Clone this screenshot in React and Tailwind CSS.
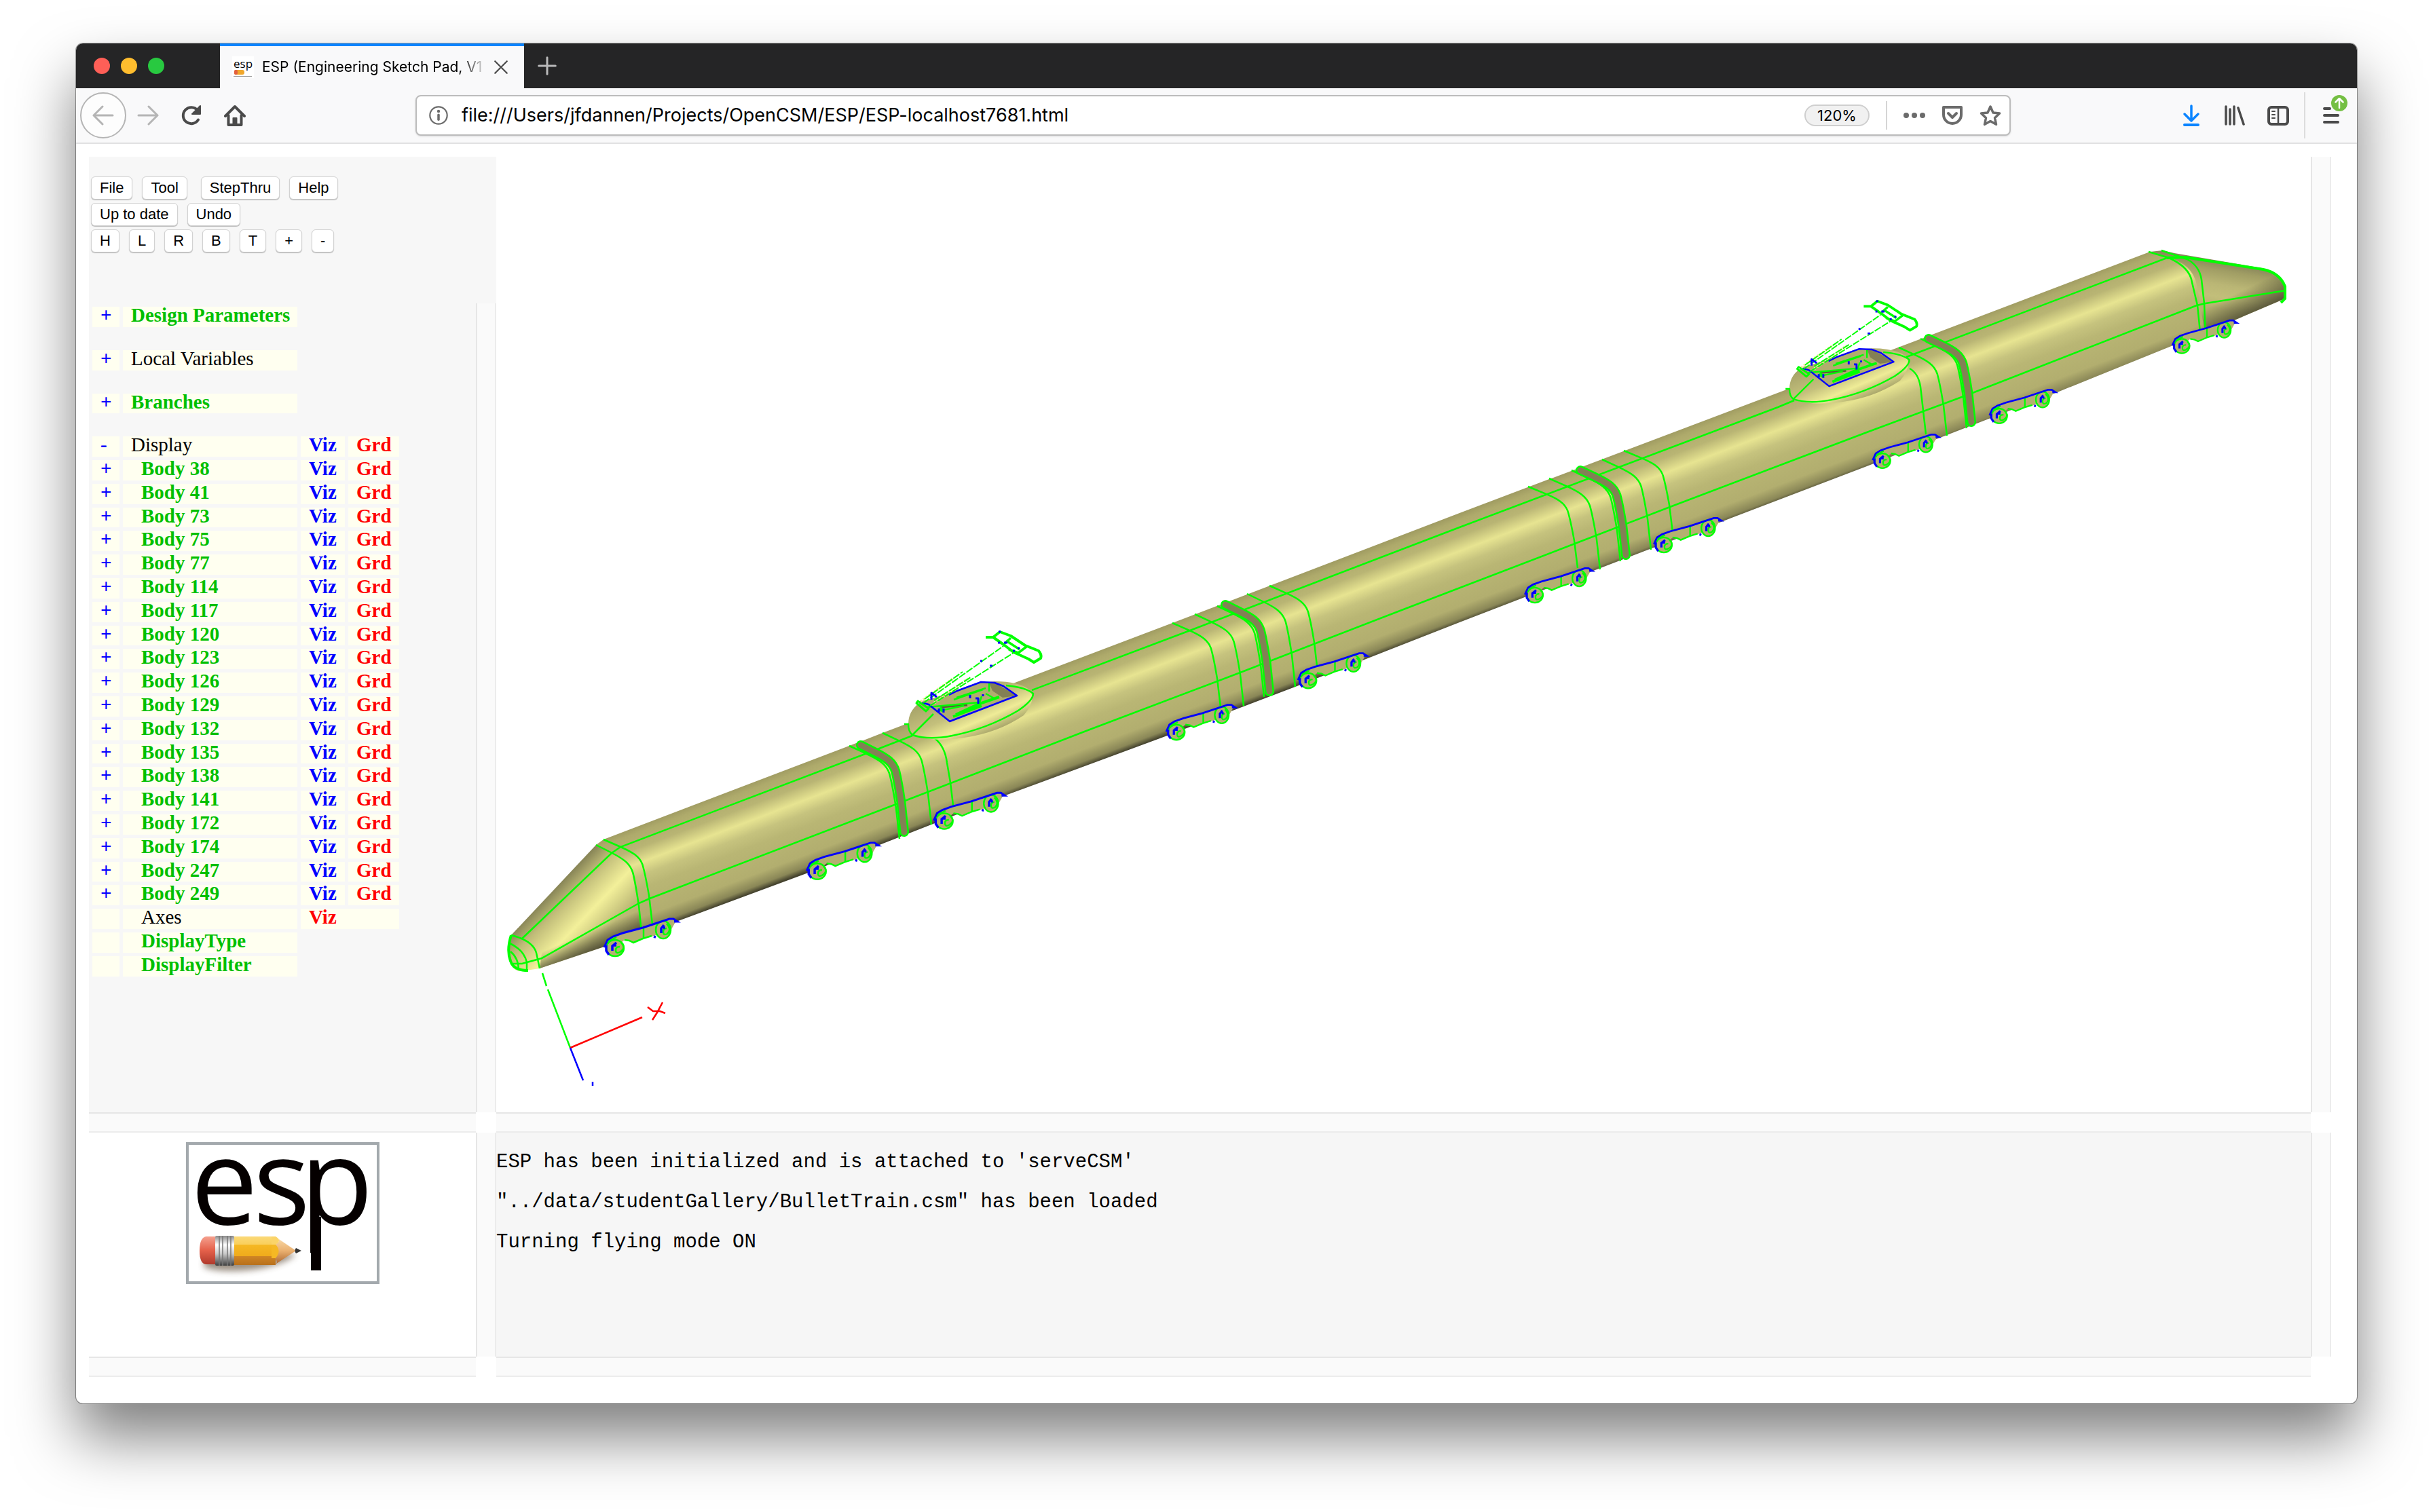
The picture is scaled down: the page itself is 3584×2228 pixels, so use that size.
import React from "react";

/* ---------- toolbar icons ---------- */

function Icon({ children, className = "size-8" }) {
  return (
    <svg
      viewBox="0 0 32 32"
      className={className}
      fill="none"
      stroke="currentColor"
      strokeWidth="4"
      strokeLinecap="round"
      strokeLinejoin="round"
      aria-hidden="true"
    >
      {children}
    </svg>
  );
}

const BackIcon = () => (
  <Icon>
    <path d="M30 16H3M15 3 2 16l13 13" strokeWidth="3" />
  </Icon>
);
const ForwardIcon = () => (
  <Icon>
    <path d="M2 16h27M17 3l13 13-13 13" strokeWidth="3" />
  </Icon>
);
const ReloadIcon = () => (
  <Icon>
    <path d="M26 22.500A12 12 0 1 1 25 8.500" />
    <path d="M29 2v12H17z" fill="currentColor" strokeWidth="2" />
  </Icon>
);
const HomeIcon = () => (
  <Icon>
    <path d="M2 17 16 3l14 14" />
    <path d="M6.500 16v14h19V16" />
    <path d="M13.500 29v-9h5v9z" fill="currentColor" strokeWidth="2" />
  </Icon>
);
const InfoIcon = () => (
  <Icon className="size-7 shrink-0">
    <circle cx="16" cy="16" r="14.500" strokeWidth="2.500" />
    <path d="M16 15v8" />
    <circle cx="16" cy="9" r="2.500" fill="currentColor" stroke="none" />
  </Icon>
);
const DotsIcon = () => (
  <Icon>
    <g fill="currentColor" stroke="none">
      <circle cx="4" cy="16" r="4" />
      <circle cx="16" cy="16" r="4" />
      <circle cx="28" cy="16" r="4" />
    </g>
  </Icon>
);
const PocketIcon = () => (
  <Icon>
    <path d="M3 4h26v11a13 13 0 0 1-26 0z" />
    <path d="m10 13 6 6 6-6" />
  </Icon>
);
const StarIcon = () => (
  <Icon>
    <path
      d="m16 3 4 9 9.500 1-7 6.700 2 9.600L16 24.500l-8.500 4.800 2-9.600-7-6.700 9.500-1z"
      strokeWidth="3.500"
    />
  </Icon>
);
const DownloadIcon = () => (
  <Icon>
    <path d="M16 2v20M6 14l10 10 10-10" strokeWidth="3.500" />
    <path d="M6 30h20" />
  </Icon>
);
const LibraryIcon = () => (
  <Icon>
    <path d="M3 3v26M9 7v22M15 3v26" strokeWidth="3.500" />
    <path d="m21 5 8 24" strokeWidth="3.500" />
  </Icon>
);
const SidebarIcon = () => (
  <Icon>
    <rect x="2" y="4" width="28" height="25" rx="4" />
    <path d="M16 4v25" strokeWidth="2.500" />
    <path d="M7 10h4M7 15h4M7 20h4" strokeWidth="2" />
  </Icon>
);
const MenuIcon = () => (
  <Icon>
    <path d="M6 6h8M6 16h20M6 26h20" />
  </Icon>
);

function ToolButton({ label, className = "", children }) {
  return (
    <button type="button" aria-label={label} className={"flex size-8 items-center justify-center " + className}>
      {children}
    </button>
  );
}

/* ---------- browser chrome ---------- */

function Favicon() {
  return (
    <svg viewBox="0 0 32 32" className="size-8 shrink-0 overflow-visible" aria-hidden="true">
      <rect width="32" height="32" fill="#fff" />
      <text x="2" y="17" fontFamily="Open Sans, sans-serif" fontSize="17">
        esp
      </text>
      <rect x="3" y="20" width="15" height="7" rx="3" fill="#f0a72c" />
      <rect x="3" y="20" width="5" height="7" rx="2" fill="#e2603f" />
      <path d="M2 29.500h27" stroke="#999" />
    </svg>
  );
}

function TitleBar() {
  return (
    <header className="flex h-[66px] shrink-0 items-stretch bg-[#252526]">
      <div className="flex w-[212px] shrink-0 items-center gap-4 pl-[26px]">
        <button type="button" aria-label="Close window" className="size-6 rounded-full bg-[#ff5f57]" />
        <button type="button" aria-label="Minimize window" className="size-6 rounded-full bg-[#ffbd2e]" />
        <button type="button" aria-label="Zoom window" className="size-6 rounded-full bg-[#28c940]" />
      </div>
      <div className="flex w-[448px] shrink-0 items-center border-t-4 border-[#0a84ff] bg-[#f9f9fa] pr-6 pl-[18px]">
        <Favicon />
        <span className="ml-3 bg-linear-to-r from-black from-88% to-[#cccccc] bg-clip-text font-['Inter','Liberation_Sans',sans-serif] text-[21px] whitespace-nowrap text-transparent">
          ESP (Engineering Sketch Pad, V1
        </span>
        <button type="button" aria-label="Close tab" className="ml-auto text-[#4a4a4a]">
          <Icon className="size-5">
            <path d="M2 2l28 28M30 2 2 30" strokeWidth="3.500" />
          </Icon>
        </button>
      </div>
      <button type="button" aria-label="New tab" className="ml-5 text-[#b9b9ba]">
        <Icon className="size-7">
          <path d="M16 2v28M2 16h28" strokeWidth="3.500" />
        </Icon>
      </button>
    </header>
  );
}

function NavBar() {
  return (
    <nav className="flex h-[82px] shrink-0 items-center border-b-2 border-[#e1e1e2] bg-[#f9f9fa] text-[#4a4a4a]">
      <button
        type="button"
        aria-label="Back"
        className="ml-1.5 flex size-[68px] items-center justify-center rounded-full border-2 border-[#b5b5b5] bg-[#fdfdfd] text-[#b5b5b5]"
      >
        <BackIcon />
      </button>
      <ToolButton label="Forward" className="ml-4 text-[#b5b5b5]">
        <ForwardIcon />
      </ToolButton>
      <ToolButton label="Reload" className="ml-8">
        <ReloadIcon />
      </ToolButton>
      <ToolButton label="Home" className="ml-8">
        <HomeIcon />
      </ToolButton>
      <div className="ml-[250px] flex h-[60px] flex-1 items-center rounded-lg border-2 border-[#bcbcbc] bg-white pr-3 pl-[18px] text-[#6b6b6b] shadow-sm">
        <InfoIcon />
        <input
          type="text"
          aria-label="Address"
          defaultValue="file:///Users/jfdannen/Projects/OpenCSM/ESP/ESP-localhost7681.html"
          className="ml-5 min-w-0 flex-1 bg-transparent font-['Inter','Liberation_Sans',sans-serif] text-[27px] text-black outline-none"
        />
        <button
          type="button"
          className="h-8 w-24 rounded-full border-2 border-[#cfcfcf] bg-[#f1f1f1] font-['Inter','Liberation_Sans',sans-serif] text-[22px] leading-7 text-black"
        >
          120%
        </button>
        <div className="mx-6 h-[42px] w-0.5 bg-[#d5d5d5]" />
        <div className="flex items-center gap-6">
          <ToolButton label="Page actions">
            <DotsIcon />
          </ToolButton>
          <ToolButton label="Save to Pocket">
            <PocketIcon />
          </ToolButton>
          <ToolButton label="Bookmark this page">
            <StarIcon />
          </ToolButton>
        </div>
      </div>
      <div className="ml-[250px] flex items-center gap-8">
        <ToolButton label="Downloads" className="text-[#0a84ff]">
          <DownloadIcon />
        </ToolButton>
        <ToolButton label="Library">
          <LibraryIcon />
        </ToolButton>
        <ToolButton label="Sidebars">
          <SidebarIcon />
        </ToolButton>
      </div>
      <div className="mx-[22px] h-[68px] w-0.5 bg-[#dcdcdc]" />
      <div className="relative mr-[22px]">
        <ToolButton label="Open menu">
          <MenuIcon />
        </ToolButton>
        <span className="absolute -top-3.5 -right-2 flex size-6 items-center justify-center rounded-full bg-[#74bf43] text-white">
          <Icon className="size-4">
            <path d="M16 30V3M5 13 16 2l11 11" strokeWidth="5" />
          </Icon>
        </span>
      </div>
    </nav>
  );
}

/* ---------- left panel ---------- */

function PushButton({ children, className = "" }) {
  return (
    <button
      type="button"
      className={
        "h-[34px] rounded-md border border-[#d2d2d2] bg-white px-3 font-['Liberation_Sans',sans-serif] text-[22px] leading-8 text-black shadow-[0_1px_1px_#b4b4b4] " +
        className
      }
    >
      {children}
    </button>
  );
}

function CommandPanel() {
  return (
    <section className="col-span-2 flex flex-col gap-[5px] bg-[#f7f7f7] pt-[29px] pl-[3px]">
      <div className="flex gap-3.5">
        <PushButton>File</PushButton>
        <PushButton className="mr-1.5">Tool</PushButton>
        <PushButton>StepThru</PushButton>
        <PushButton>Help</PushButton>
      </div>
      <div className="flex gap-3.5">
        <PushButton>Up to date</PushButton>
        <PushButton>Undo</PushButton>
      </div>
      <div className="flex gap-3.5">
        {["H", "L", "R", "B", "T", "+", "-"].map((k) => (
          <PushButton key={k}>{k}</PushButton>
        ))}
      </div>
    </section>
  );
}

const BODIES = [38, 41, 73, 75, 77, 114, 117, 120, 123, 126, 129, 132, 135, 138, 141, 172, 174, 247, 249];

const TREE = [
  { mark: "+", name: "Design Parameters", link: true },
  null,
  { mark: "+", name: "Local Variables" },
  null,
  { mark: "+", name: "Branches", link: true },
  null,
  { mark: "-", name: "Display", viz: "blue", grd: true },
  ...BODIES.map((n) => ({ mark: "+", name: "Body " + n, link: true, child: true, viz: "blue", grd: true })),
  { mark: "", name: "Axes", child: true, viz: "red" },
  { mark: "", name: "DisplayType", link: true, child: true },
  { mark: "", name: "DisplayFilter", link: true, child: true },
];

const CELL = "bg-[#fffff0] p-0 align-top";
const CELL_BUTTON = "block px-3 font-bold leading-6 ";

function TreeTable() {
  return (
    <table className="w-[462px] table-fixed border-separate border-spacing-[5px] font-['Liberation_Serif',serif] text-[29px] text-black">
      <colgroup>
        <col className="w-10" />
        <col className="w-[257px]" />
        <col className="w-[65px]" />
        <col className="w-[75px]" />
      </colgroup>
      <tbody>
        {TREE.map((row, i) =>
          row === null ? (
            <tr key={i} className="h-6">
              <td colSpan={4} className="p-0" />
            </tr>
          ) : (
            <tr key={i} className="h-[30px] nth-[5n]:h-[29px]">
              <td className={CELL}>
                {row.mark && (
                  <button type="button" aria-label={"Toggle " + row.name} className={CELL_BUTTON + "text-[#0000ff]"}>
                    {row.mark}
                  </button>
                )}
              </td>
              <td className={CELL}>
                <div className={"leading-6 whitespace-nowrap " + (row.child ? "pl-[27px]" : "pl-3")}>
                  {row.link ? (
                    <button type="button" className="block leading-6 font-bold text-[#00bf00]">
                      {row.name}
                    </button>
                  ) : (
                    row.name
                  )}
                </div>
              </td>
              {row.viz && (
                <td className={CELL} colSpan={row.grd ? 1 : 2}>
                  <button
                    type="button"
                    className={CELL_BUTTON + (row.viz === "blue" ? "text-[#0000ff]" : "text-[#ff0000]")}
                  >
                    Viz
                  </button>
                </td>
              )}
              {row.grd && (
                <td className={CELL}>
                  <button type="button" className={CELL_BUTTON + "text-[#ff0000]"}>
                    Grd
                  </button>
                </td>
              )}
            </tr>
          )
        )}
      </tbody>
    </table>
  );
}

function Logo() {
  return (
    <svg viewBox="0 0 285 209" className="mt-3.5 w-[285px] overflow-visible" role="img" aria-label="esp">
      <defs>
        <linearGradient id="wood" x1="0" y1="0" x2="0" y2="1">
          <stop offset="0" stopColor="#fbd978" />
          <stop offset=".28" stopColor="#f9cf5c" />
          <stop offset=".3" stopColor="#f5b824" />
          <stop offset=".68" stopColor="#f0ab1c" />
          <stop offset=".7" stopColor="#cf8424" />
          <stop offset="1" stopColor="#b8701c" />
        </linearGradient>
        <linearGradient id="metal" x1="0" y1="0" x2="0" y2="1">
          <stop offset="0" stopColor="#8b8b8b" />
          <stop offset=".3" stopColor="#ffffff" />
          <stop offset=".6" stopColor="#c9c9c9" />
          <stop offset="1" stopColor="#3f3f3f" />
        </linearGradient>
        <linearGradient id="rubber" x1="0" y1="0" x2="0" y2="1">
          <stop offset="0" stopColor="#f5a08e" />
          <stop offset=".5" stopColor="#e4604a" />
          <stop offset="1" stopColor="#b03a2c" />
        </linearGradient>
        <linearGradient id="tip" x1="0" y1="0" x2="0" y2="1">
          <stop offset="0" stopColor="#fbe0b0" />
          <stop offset=".5" stopColor="#eab070" />
          <stop offset="1" stopColor="#a8612a" />
        </linearGradient>
        <filter id="soft" x="-20%" y="-60%" width="140%" height="220%">
          <feGaussianBlur stdDeviation="5" />
        </filter>
      </defs>
      <rect x="2" y="2" width="281" height="205" fill="#fff" stroke="#a3a9ad" strokeWidth="4" />
      <g fontFamily="Open Sans, sans-serif" fontSize="176" fill="#050000">
        <text x="7 99 168" y="121">
          esp
        </text>
        <rect x="184" y="110" width="15" height="79" />
      </g>
      <path d="M26 184c20 10 100 10 136-18l-30-6H30z" fill="#5b4a35" opacity=".6" filter="url(#soft)" />
      <path d="M44 139H30q-10 1-10 21t10 20h14z" fill="url(#rubber)" />
      <rect x="70" y="139" width="62" height="42" fill="url(#wood)" />
      <path d="M131 139q12 6 0 12 9 10 0 20 6 6-1 10l32-21z" fill="url(#tip)" />
      <path d="M126 139h6q10 6 0 12h-6z" fill="#fbd469" />
      <path d="M126 151h6q9 9 0 20h-6z" fill="#f5b824" />
      <path d="m162 156 8 4-8 4q-3-4 0-8z" fill="#333" />
      <rect x="43" y="138" width="28" height="44" rx="2" fill="url(#metal)" />
      <path d="M49 138v44M54 138v44M61 138v44M66 138v44" stroke="#777" strokeWidth="1.500" />
    </svg>
  );
}

/* ---------- 3D view ---------- */

/* Cross-section outlines: top and bottom ends on the silhouette of the hull. */
const RINGS = [
  [878, 1245, 946, 1383],
  [889, 1237, 961, 1362],
  [1251, 1099, 1325, 1236],
  [1300, 1080, 1372, 1215],
  [1727, 918, 1798, 1042],
  [1760, 905, 1832, 1040],
  [1793, 893, 1862, 1027],
  [1837, 875, 1908, 1012],
  [1870, 863, 1941, 990],
  [2251, 717, 2324, 837],
  [2282, 705, 2357, 839],
  [2315, 693, 2387, 827],
  [2360, 677, 2432, 810],
  [2392, 664, 2464, 785],
  [2797, 512, 2868, 642],
  [2829, 499, 2897, 631],
];

const GANGWAYS = [
  [1268, 1098, 1332, 1226],
  [1805, 891, 1870, 1019],
  [2328, 693, 2395, 818],
  [2841, 499, 2904, 622],
];

/* Front wheel centre and size of each bogie. */
const BOGIES = [
  [906, 1397, 1],
  [1204, 1284, 0.98],
  [1391, 1210, 0.97],
  [1733, 1079, 0.94],
  [1927, 1003, 0.94],
  [2261, 877, 0.92],
  [2451, 803, 0.92],
  [2773, 679, 0.9],
  [2945, 613, 0.9],
  [3214, 510, 0.88],
];

function ringPath([x1, y1, x2, y2]) {
  const p = (u, v) => (x1 + u * (x2 - x1)).toFixed(1) + " " + (y1 + v * (y2 - y1)).toFixed(1);
  return `M${p(0, 0)} L${p(0.32, 0.08)} C${p(0.6, 0.15)} ${p(0.74, 0.2)} ${p(0.8, 0.3)} C${p(0.86, 0.42)} ${p(0.9, 0.56)} ${p(0.93, 0.66)} L${p(1, 1)}`;
}

function Bogie() {
  return (
    <g strokeWidth="2.500" fill="none">
      <path d="M-12-10-3-17 82-43 90-40 82-26 54-17 41-14 27-8 14-12 0 0z" fill="#b4b070" />
      <g stroke="#00ff00">
        <path d="M14-12l7 1 6 3 14-6 13-4M42-14v-17M-10-10l12-6" />
        <ellipse cx="0" cy="0" rx="13" ry="12" fill="#b4b070" />
        <path d="M9-8q8 8-2 14-6 3-6-3 0-5 6-5" />
        <ellipse cx="71" cy="-27" rx="11" ry="13" fill="#b4b070" />
        <path d="M76-36q8 8 1 15-6 3-6-3 0-5 5-5" />
      </g>
      <g stroke="#0000ff">
        <path d="M-16-1-11-12-3-17 11-22 41-30 80-43h6l6 4h-5" strokeWidth="3" />
        <path d="M-13-4v8l4 6M2-8l-6 5v7M-2-4h4M57-17l3 1M72-34l-4 5v7M71-30h3" strokeWidth="3.500" />
      </g>
    </g>
  );
}

/* Roof fairing with the pantograph raised out of it. */
function Pantograph() {
  return (
    <g fill="none" stroke="#00ff00" strokeWidth="2.500" strokeLinejoin="round">
      <path
        d="M1338 1067 Q1338 1048 1354 1036 L1440 1006 1466 1004 Q1500 1004 1516 1016 Q1528 1030 1508 1054 Q1470 1080 1420 1087 Q1370 1094 1344 1083 Q1336 1076 1338 1067z"
        fill="url(#dome)"
        stroke="none"
      />
      <path d="M1332 1067H1338Q1338 1078 1344 1083 1368 1091 1403 1084 1454 1074 1500 1047 1522 1032 1522 1022 1512 1013 1482 1010" />
      <path d="M1344 1083 1375 1052" />
      <path d="M1353 1034 1399 1063 1498 1025 1465 1006 1445 1005 1410 1018 1398 1024z" fill="#b1ad6e" stroke="none" />
      <path d="M1457 1006 1465 1006 1498 1025 1477 1028 1462 1018z" fill="#838055" stroke="none" />
      <path d="M1385 1042 1425 1039" stroke="#5c5a3c" strokeWidth="3" />
      <path d="M1366 1042 1443 1035 1446 1026M1405 1031 1448 1016M1409 1028 1452 1014M1457 1007v12M1380 1048 1420 1040M1452 1022 1466 1030" />
      <path d="M1408 1053 1440 1038 1472 1027M1404 1056 1446 1040" strokeWidth="4" />
      <path d="M1384 1043 1390 1048" strokeWidth="5" />
      <path d="M1353 1034 1368 1038 1399 1063 1498 1025 1478 1011 1465 1006 1445 1005 1410 1018 1398 1024" stroke="#0000ff" />
      <path d="M1429 1024v5M1437 1029h4v8M1448 1023v3M1383 1044v5M1390 1044v6" stroke="#0000ff" strokeWidth="3" />
      <path d="M1356 1034 1404 1000M1376 1036 1426 1000" stroke="#f0eb9c" strokeWidth="4" strokeDasharray="3 2" />
      <path d="M1360 1036 1478 952M1370 1040 1493 962M1362 1030 1418 990M1376 1032 1430 998" strokeDasharray="11 2" strokeWidth="2" />
      <path d="M1350 1036l14 12 4-4-16-11z" strokeWidth="3" />
      <path d="M1372 1031v-10l8 6" stroke="#0000ff" strokeWidth="3" />
      <path
        d="M1452 939h11l10-8 16 6 21 14 20 8q5 6 3 11l-10 6-8-5-22-10-13-10-17-12"
        strokeWidth="4"
      />
      <path d="M1480 948 1489 940M1486 957 1500 962 1512 953M1482 944 1502 957" strokeWidth="3.500" />
      <path d="M1470 947h3M1479 947h5M1492 959h3M1499 955h3M1471 931h3M1444 974h3M1458 981h4" stroke="#0000ff" strokeWidth="3" />
    </g>
  );
}

const TAIL = "M3167 371 3186 369 3203 373 3332 395Q3362 404 3367 425L3366 440 3291 472 3241 498z";

function TrainView() {
  return (
    <svg viewBox="731 231 2673 1408" className="block w-full" role="img" aria-label="Bullet train model">
      <defs>
        <linearGradient id="hull" gradientUnits="userSpaceOnUse" x1="1600" y1="966" x2="1654" y2="1108">
          <stop offset="0" stopColor="#a09c62" />
          <stop offset=".06" stopColor="#aeaa6b" />
          <stop offset=".2" stopColor="#b9b574" />
          <stop offset=".34" stopColor="#e7e491" />
          <stop offset=".46" stopColor="#c6c37e" />
          <stop offset=".58" stopColor="#b9b674" />
          <stop offset=".84" stopColor="#b2ae6f" />
          <stop offset=".95" stopColor="#8a8757" />
          <stop offset="1" stopColor="#45432e" />
        </linearGradient>
        <linearGradient id="nose" gradientUnits="userSpaceOnUse" x1="821" y1="1307" x2="929" y2="1411">
          <stop offset="0" stopColor="#8a8758" />
          <stop offset=".15" stopColor="#bfbb78" />
          <stop offset=".4" stopColor="#f3f09a" />
          <stop offset=".65" stopColor="#bdb976" />
          <stop offset=".9" stopColor="#aca86b" />
          <stop offset="1" stopColor="#8f8c5b" />
        </linearGradient>
        <linearGradient id="underside" gradientUnits="userSpaceOnUse" x1="860" y1="1376" x2="872" y2="1404">
          <stop offset="0" stopColor="#45432e" stopOpacity="0" />
          <stop offset="1" stopColor="#45432e" stopOpacity=".9" />
        </linearGradient>
        <linearGradient id="tail" gradientUnits="userSpaceOnUse" x1="3268" y1="383" x2="3256" y2="453">
          <stop offset="0" stopColor="#86835a" />
          <stop offset=".2" stopColor="#a09d64" />
          <stop offset=".5" stopColor="#bab675" />
          <stop offset=".75" stopColor="#c2be7a" />
          <stop offset="1" stopColor="#b5b171" />
        </linearGradient>
        <linearGradient id="tailShade" gradientUnits="userSpaceOnUse" x1="3278" y1="440" x2="3294" y2="473">
          <stop offset="0" stopColor="#45432e" stopOpacity="0" />
          <stop offset="1" stopColor="#45432e" stopOpacity=".8" />
        </linearGradient>
        <linearGradient id="dome" gradientUnits="userSpaceOnUse" x1="1412" y1="1012" x2="1444" y2="1086">
          <stop offset="0" stopColor="#a5a268" />
          <stop offset=".45" stopColor="#c4c07c" />
          <stop offset=".72" stopColor="#efec97" />
          <stop offset="1" stopColor="#a8a56a" />
        </linearGradient>
      </defs>

      <path d={TAIL} fill="url(#tail)" />
      <path d={TAIL} fill="url(#tailShade)" />
      <path
        d="M878 1245 889 1237 1251 1099 1300 1080 1727 918 2150 756 2563 600 2841 495 3167 371 3190 378Q3230 388 3236 420L3248 490 3033 577 2868 641 2750 687 2433 808 2150 917 1908 1012 1714 1086 1481 1172 1372 1215 1188 1287 999 1357 925 1385z"
        fill="url(#hull)"
      />
      <path
        d="M753 1378 878 1245Q926 1262 932 1290L948 1376 887 1396 795 1427 769 1431Q755 1432 750 1415 745 1396 753 1378z"
        fill="url(#nose)"
      />
      <path d="M800 1390 940 1340 948 1376 887 1396 795 1427z" fill="url(#underside)" />

      {/* longitudinal edges and section outlines */}
      <g fill="none" stroke="#00ff00" strokeWidth="2.500">
        <path d="M769 1383 901 1257 914 1248 1277 1110 1344 1084M1520 1017 1753 929 2150 777 2619 600 2643 590M2780 537 2824 520 3192 380 3219 379" />
        <path d="M3192 380 3219 379 3334 397Q3358 402 3366 422L3366 440 3360 446" strokeWidth="4" />
        <path d="M753 1420H769L798 1412 941 1331 957 1324 1320 1185 1600 1077 1827 991 2070 897 2320 801 2460 747 2750 637 2898 582 3236 450 3249 447 3367 428" />
        {RINGS.map((r, i) => (
          <path key={i} d={ringPath(r)} />
        ))}
        <path d="M1377 1088Q1392 1100 1395 1124L1400 1153 1405 1195M2813 543Q2826 550 2829 570L2833 605 2837 640" />
        <path d="M3165 371 3195 380Q3226 394 3229 416L3237 450 3241 490M3184 369 3222 382Q3240 392 3243 412L3247 447 3249 498" />
        <path d="M753 1378Q785 1386 790 1404L795 1427M751 1390Q772 1400 776 1418L776 1430M752 1402Q764 1412 764 1430" />
        <path d="M753 1378Q746 1400 752 1416 756 1430 778 1430" strokeWidth="4" />
      </g>

      {/* gaps between the cars */}
      {GANGWAYS.map((g, i) => (
        <g key={i} fill="none" strokeLinecap="round">
          <path d={ringPath(g)} stroke="#00ff00" strokeWidth="14" />
          <path d={ringPath(g)} stroke="#838055" strokeWidth="9" />
        </g>
      ))}

      {BOGIES.map(([x, y, s], i) => (
        <g key={i} transform={`translate(${x} ${y}) scale(${s})`}>
          <Bogie />
        </g>
      ))}

      <Pantograph />
      <g transform="translate(2635 573) scale(.96 .95) translate(-1337 -1067)">
        <Pantograph />
      </g>

      {/* coordinate axes */}
      <g fill="none" strokeWidth="2.500">
        <path d="M799 1434 805 1453M807 1458 840 1544" stroke="#00ff00" />
        <path d="M840 1544 946 1499M954 1484 962 1490 972 1490 980 1493M976 1477 968 1492 961 1503" stroke="#ff0000" />
        <path d="M840 1544 859 1592M873 1594v6" stroke="#0000ff" />
      </g>
    </svg>
  );
}

/* ---------- page ---------- */

const MESSAGES = [
  "ESP has been initialized and is attached to 'serveCSM'",
  '"../data/studentGallery/BulletTrain.csm" has been loaded',
  "Turning flying mode ON",
];

const VStrip = ({ className = "" }) => (
  <div className={"border-r-2 border-l-2 border-r-[#ececec] border-l-[#e6e6e6] bg-[#fafafa] " + className} />
);
const HStrip = () => <div className="border-t-2 border-b-2 border-t-[#e6e6e6] border-b-[#ececec] bg-[#fafafa]" />;

export default function App() {
  return (
    <div className="flex min-h-screen flex-col bg-white px-28 pt-16 pb-40">
      <div className="flex flex-1 flex-col overflow-hidden rounded-[10px] bg-white shadow-[0_0_0_1px_rgba(0,0,0,0.35),0_50px_88px_rgba(0,0,0,0.5)]">
        <TitleBar />
        <NavBar />
        <main className="grid flex-1 grid-cols-[570px_30px_minmax(0,1fr)_30px] grid-rows-[216px_minmax(0,1fr)_30px_330px_30px] pt-[19px] pr-[38px] pb-[39px] pl-[19px]">
          <CommandPanel />
          <section className="row-span-2 bg-white">
            <TrainView />
          </section>
          <VStrip className="row-span-2" />

          <section className="bg-[#f7f7f7]">
            <TreeTable />
          </section>
          <VStrip />

          <HStrip />
          <div />
          <HStrip />
          <div />

          <section className="flex items-start justify-center bg-white">
            <Logo />
          </section>
          <VStrip />
          <section className="flex flex-col gap-[27px] bg-[#f6f6f6] pt-7 font-['Liberation_Mono',monospace] text-[29px] leading-8 text-black">
            {MESSAGES.map((m) => (
              <p key={m}>{m}</p>
            ))}
          </section>
          <VStrip />

          <HStrip />
          <div />
          <HStrip />
        </main>
      </div>
    </div>
  );
}
